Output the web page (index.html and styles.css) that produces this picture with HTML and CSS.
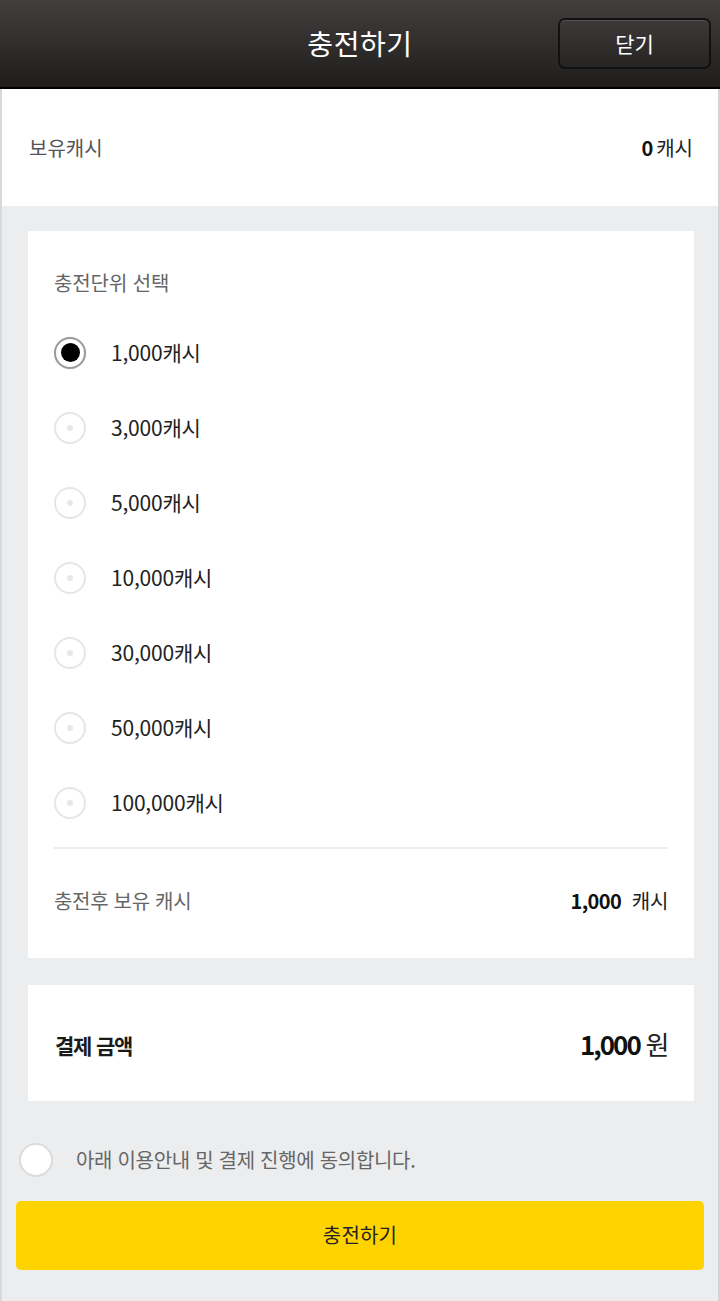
FILE: index.html
```html
<!DOCTYPE html>
<html lang="ko">
<head>
<meta charset="utf-8">
<title>충전하기</title>
<link rel="stylesheet" href="styles.css">
</head>
<body>
<div class="page">
  <header class="topbar">
    <h1 class="topbar-title">충전하기</h1>
    <button class="close-btn">닫기</button>
  </header>

  <section class="balance">
    <span class="balance-label">보유캐시</span>
    <span class="balance-value"><b>0</b>캐시</span>
  </section>

  <main class="content">
    <section class="card units">
      <h2 class="units-title">충전단위 선택</h2>
      <ul class="unit-list">
        <li class="unit"><span class="radio checked"></span><span class="unit-label">1,000캐시</span></li>
        <li class="unit"><span class="radio"></span><span class="unit-label">3,000캐시</span></li>
        <li class="unit"><span class="radio"></span><span class="unit-label">5,000캐시</span></li>
        <li class="unit"><span class="radio"></span><span class="unit-label">10,000캐시</span></li>
        <li class="unit"><span class="radio"></span><span class="unit-label">30,000캐시</span></li>
        <li class="unit"><span class="radio"></span><span class="unit-label">50,000캐시</span></li>
        <li class="unit"><span class="radio"></span><span class="unit-label">100,000캐시</span></li>
      </ul>
      <div class="after">
        <span class="after-label">충전후 보유 캐시</span>
        <span class="after-value"><b>1,000</b>&nbsp; 캐시</span>
      </div>
    </section>

    <section class="card pay">
      <span class="pay-label">결제 금액</span>
      <span class="pay-value"><b>1,000</b> 원</span>
    </section>

    <div class="agree">
      <span class="agree-check"></span>
      <span class="agree-text">아래 이용안내 및 결제 진행에 동의합니다.</span>
    </div>

    <button class="submit">충전하기</button>
  </main>
</div>
</body>
</html>
```

FILE: styles.css
```css
* { box-sizing: border-box; }
html, body { margin: 0; padding: 0; }
body {
  font-family: "Noto Sans CJK KR", "Noto Sans", sans-serif;
  background: #ecedef;
  width: 720px;
}
.page {
  width: 720px;
  min-height: 1301px;
  background: #ecedef;
  border-left: 2px solid #d9d9d9;
  border-right: 2px solid #d4d4d4;
}
.topbar {
  height: 89px;
  margin: 0 -2px;
  background: linear-gradient(#423e3d, #1f1e1d);
  border-bottom: 2px solid #000;
  display: flex;
  align-items: center;
  justify-content: center;
  position: relative;
}
.topbar-title {
  margin: 0;
  color: #fff;
  font-size: 28px;
  font-weight: 400;
  letter-spacing: 0.6px;
  line-height: 1;
  padding-bottom: 2px;
}
.close-btn {
  position: absolute;
  left: 558px;
  top: 18px;
  width: 153px;
  height: 51px;
  border: 2px solid #111;
  border-radius: 7px;
  background: linear-gradient(#3c3938, #272524);
  box-shadow: inset 0 1px 0 rgba(255,255,255,0.12);
  color: #fff;
  font-family: inherit;
  font-size: 21px;
  letter-spacing: 0;
  padding: 0 0 2px;
}
.balance {
  height: 117px;
  background: #fff;
  display: flex;
  align-items: center;
  justify-content: space-between;
  padding: 0 25px 0 27px;
  font-size: 20px;
  letter-spacing: 0;
}
.balance-label { color: #555; }
.balance-value { color: #222; }
.balance-value b { font-weight: 700; color: #111; margin-right: 3px; }

.content {
  padding: 25px 14px 30px;
  display: flex;
  flex-direction: column;
}
.card {
  background: #fff;
  margin: 0 10px 0 12px;
}
.units {
  padding: 37px 26px 6px;
}
.units-title {
  margin: 0;
  font-size: 20px;
  font-weight: 400;
  color: #666;
  line-height: 30px;
  letter-spacing: -0.1px;
}
.unit-list {
  list-style: none;
  margin: 17px 0 0;
  padding: 0;
}
.unit {
  height: 75px;
  display: flex;
  align-items: center;
}
.radio {
  width: 32px;
  height: 32px;
  border-radius: 50%;
  border: 2px solid #e6e6e6;
  display: flex;
  align-items: center;
  justify-content: center;
  flex: none;
}
.radio::after {
  content: "";
  width: 6px;
  height: 6px;
  border-radius: 50%;
  background: #e8e8e8;
}
.radio.checked {
  border: 2px solid #9a9a9a;
  box-shadow: 0 0 1px #bbb;
}
.radio.checked::after {
  width: 19px;
  height: 19px;
  background: #000;
}
.unit-label {
  margin-left: 25px;
  font-size: 21px;
  color: #222;
  letter-spacing: -0.2px;
  padding-bottom: 2px;
}
.after {
  margin-top: 7px;
  border-top: 2px solid #ececec;
  height: 105px;
  display: flex;
  align-items: center;
  justify-content: space-between;
  font-size: 20px;
  letter-spacing: -0.3px;
}
.after-label { color: #666; }
.after-value { color: #222; }
.after-value b { font-weight: 700; color: #111; letter-spacing: -0.6px; }

.pay {
  margin-top: 27px;
  height: 116px;
  padding: 0 26px 0 27px;
  display: flex;
  align-items: center;
  justify-content: space-between;
}
.pay-label {
  font-size: 21px;
  font-weight: 700;
  color: #1a1a1a;
  letter-spacing: -1.2px;
  padding-top: 4px;
}
.pay-value {
  font-size: 26px;
  color: #222;
  letter-spacing: -1.5px;
}
.pay-value b { font-weight: 700; color: #111; letter-spacing: -2px; }

.agree {
  margin-top: 42px;
  display: flex;
  align-items: center;
  height: 34px;
  padding-left: 3px;
}
.agree-check {
  width: 34px;
  height: 34px;
  border-radius: 50%;
  background: #fff;
  border: 2px solid #dcdcdc;
  flex: none;
}
.agree-text {
  margin-left: 23px;
  font-size: 20px;
  color: #666;
  letter-spacing: -0.3px;
  padding-bottom: 2px;
}
.submit {
  margin-top: 24px;
  height: 69px;
  width: 688px;
  border: 0;
  border-radius: 5px;
  background: #ffd300;
  font-family: inherit;
  font-size: 20px;
  color: #222;
  letter-spacing: 0.2px;
  padding: 0 0 2px;
}
```
